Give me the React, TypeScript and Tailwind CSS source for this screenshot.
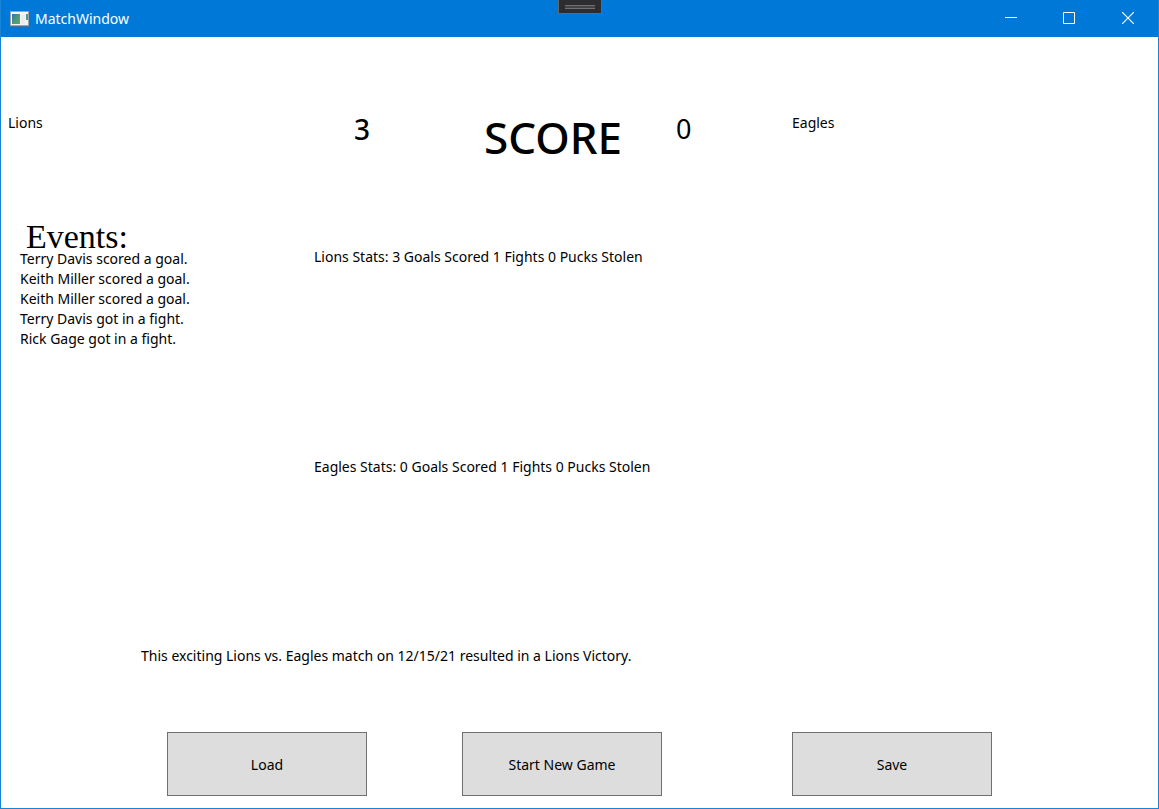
const events = [
  'Terry Davis scored a goal.',
  'Keith Miller scored a goal.',
  'Keith Miller scored a goal.',
  'Terry Davis got in a fight.',
  'Rick Gage got in a fight.',
];

function AppIcon() {
  return (
    <svg width="19" height="16" viewBox="0 0 19 16" aria-hidden="true">
      <defs>
        <linearGradient id="pane" x1="0" y1="0" x2="1" y2="1">
          <stop offset="0" stopColor="#3c6fa8" />
          <stop offset="0.5" stopColor="#4a9a7c" />
          <stop offset="1" stopColor="#62a56c" />
        </linearGradient>
      </defs>
      <rect x="0.5" y="0.5" width="18" height="14" fill="#f4f4f4" stroke="#a3a3a3" />
      <path d="M0 15.5h19" stroke="#4b6f92" />
      <rect x="2" y="3" width="8" height="10" fill="url(#pane)" />
      <rect x="11" y="4" width="4" height="9" fill="#ececee" />
      <rect x="16" y="3" width="2" height="6" fill="#4a9a8c" />
    </svg>
  );
}

function TitleBar() {
  return (
    <header className="relative flex h-[37px] shrink-0 items-center bg-[#0078d7] text-white">
      <div className="flex flex-1 items-center gap-[6px] pl-[9px]">
        <AppIcon />
        <h1 className="text-sm leading-5">MatchWindow</h1>
      </div>
      <div className="absolute top-0 left-1/2 flex h-[14px] w-11 -translate-x-1/2 flex-col items-center border border-t-0 border-[#686868] bg-[#2d2d30] pt-[5px]">
        <div className="h-1 w-[30px] border-y border-[#707070] bg-[#444446]" />
      </div>
      <div className="flex self-start">
        <button type="button" aria-label="Minimize" className="flex h-9 w-[58px] items-center justify-center">
          <svg width="12" height="12" viewBox="0 0 12 12" stroke="currentColor"><path d="M0 5.5h12" /></svg>
        </button>
        <button type="button" aria-label="Maximize" className="flex h-9 w-[58px] items-center justify-center">
          <svg width="12" height="12" viewBox="0 0 12 12" fill="none" stroke="currentColor"><path d="M.5.5h11v11H.5z" /></svg>
        </button>
        <button type="button" aria-label="Close" className="flex h-9 w-[60px] items-center justify-center">
          <svg width="12" height="12" viewBox="0 0 12 12" stroke="currentColor" strokeWidth="1.2"><path d="M0 0l12 12M12 0L0 12" /></svg>
        </button>
      </div>
    </header>
  );
}

function ActionButton({ label }: { label: string }) {
  return (
    <button type="button" className="h-16 w-[200px] border border-[#707070] bg-[#dddddd] pt-px text-sm">
      {label}
    </button>
  );
}

export default function App() {
  return (
    <div className="flex min-h-screen flex-col border border-t-0 border-[#1883d7] bg-white font-['Noto_Sans',sans-serif] text-sm leading-5 text-black">
      <TitleBar />
      <main className="flex flex-1 flex-col">
        <section className="grid grid-cols-[346fr_130fr_192fr_116fr_366fr] items-start pt-[76px] pl-[7px]">
          <p>Lions</p>
          <p className="text-[28px] leading-8 font-medium">3</p>
          <h2 className="text-[44px] leading-[48px] font-medium">SCORE</h2>
          <p className="text-[27px] leading-8">0</p>
          <p>Eagles</p>
        </section>
        <section className="grid grid-cols-[294fr_844fr] pt-16 pl-[19px]">
          <div>
            <h2 className="pl-[6px] font-['Liberation_Serif',serif] text-[34px] leading-6">Events:</h2>
            <ul>
              {events.map((event, i) => <li key={i}>{event}</li>)}
            </ul>
          </div>
          <div className="flex flex-col gap-[190px] pt-[22px]">
            <p>Lions Stats: 3 Goals Scored 1 Fights 0 Pucks Stolen</p>
            <p>Eagles Stats: 0 Goals Scored 1 Fights 0 Pucks Stolen</p>
          </div>
        </section>
        <p className="mt-auto pl-[140px]">This exciting Lions vs. Eagles match on 12/15/21 resulted in a Lions Victory.</p>
        <footer className="grid grid-cols-[295fr_330fr_366fr] pt-[66px] pb-3 pl-[166px]">
          <ActionButton label="Load" />
          <ActionButton label="Start New Game" />
          <ActionButton label="Save" />
        </footer>
      </main>
    </div>
  );
}
